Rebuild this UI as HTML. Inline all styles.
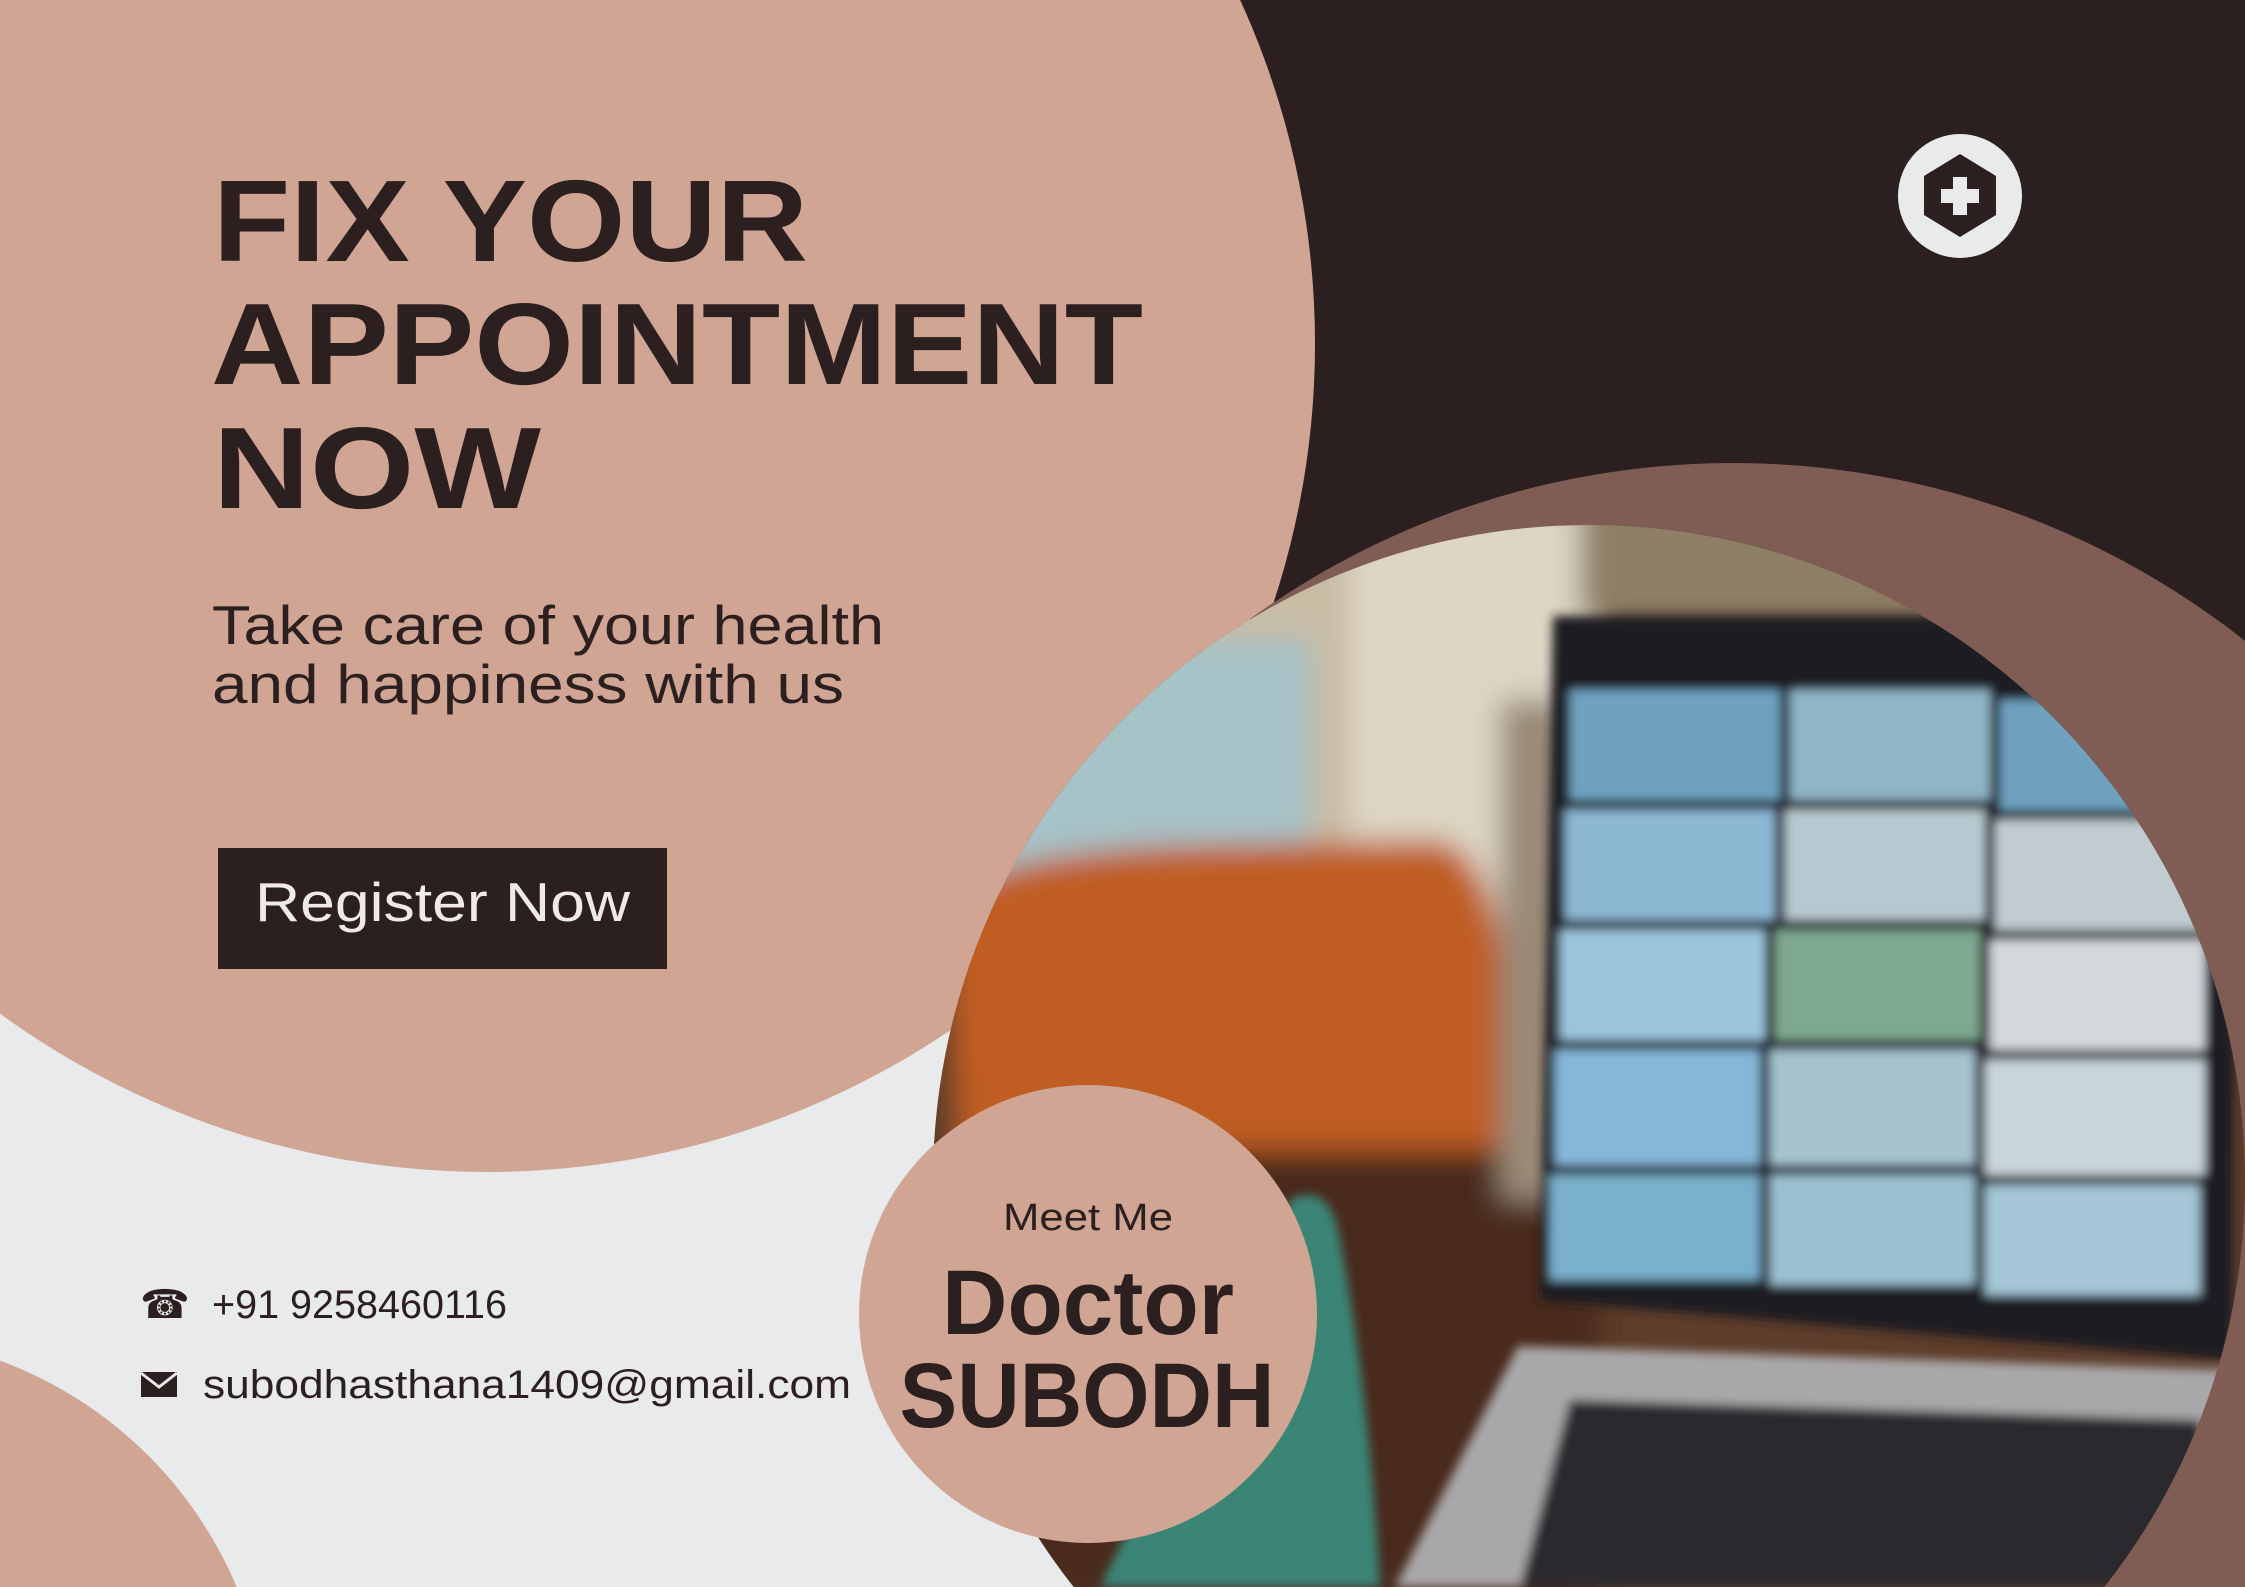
<!DOCTYPE html>
<html><head><meta charset="utf-8"><style>
html,body{margin:0;padding:0;width:2245px;height:1587px;overflow:hidden;background:#e9eaec}
svg{display:block}
text{font-family:"Liberation Sans",sans-serif}
</style></head><body>
<svg width="2245" height="1587" viewBox="0 0 2245 1587" xmlns="http://www.w3.org/2000/svg">
<defs>
<clipPath id="pc"><circle cx="1589" cy="1181" r="656"/></clipPath>
<clipPath id="bc"><rect x="1250" y="0" width="1000" height="1587"/></clipPath>
<filter id="bl" x="-20%" y="-20%" width="140%" height="140%"><feGaussianBlur stdDeviation="14"/></filter>
<filter id="bl2"><feGaussianBlur stdDeviation="5"/></filter>
</defs>
<rect width="2245" height="1587" fill="#e9eaec"/>
<rect x="1150" y="0" width="1095" height="1100" fill="#2b1f1f"/>
<circle cx="487" cy="344" r="828" fill="#d0a593"/>
<circle cx="-143" cy="1747" r="412" fill="#d0a593"/>
<circle cx="1733" cy="1289" r="826" fill="#7f5c54" clip-path="url(#bc)"/>
<g clip-path="url(#pc)">
<rect x="900" y="500" width="1400" height="1100" fill="#5e3d2a"/>
<g filter="url(#bl)">
<rect x="900" y="500" width="700" height="420" fill="#c8bca4"/>
<rect x="1350" y="500" width="250" height="500" fill="#ddd6c4"/>
<rect x="980" y="640" width="330" height="240" fill="#a6c3c8"/>
<rect x="1580" y="500" width="500" height="120" fill="#8e8066"/>
<path d="M945 900 Q1000 850 1200 845 L1440 840 Q1500 860 1505 1000 L1500 1200 L960 1220 Z" fill="#c05d22"/>
<rect x="900" y="1150" width="700" height="450" fill="#4a2a1c"/>
<rect x="1500" y="700" width="70" height="500" fill="#9a8a78"/>
</g>
<g filter="url(#bl2)">
<polygon points="1553,616 1962,616 2234,860 2232,1360 1540,1300" fill="#1d1d22"/>
<g fill="#6fa2c0">
<rect x="1570" y="690" width="210" height="110"/><rect x="1790" y="690" width="200" height="110" fill="#8fb6c6"/><rect x="2000" y="700" width="200" height="110"/>
<rect x="1565" y="810" width="210" height="110" fill="#8db8d4"/><rect x="1785" y="810" width="200" height="110" fill="#b7c9d0"/><rect x="1995" y="820" width="210" height="110" fill="#c0ccd0"/>
<rect x="1560" y="930" width="205" height="110" fill="#9cc5dc"/><rect x="1775" y="930" width="205" height="110" fill="#7ea890"/><rect x="1990" y="940" width="215" height="110" fill="#d3d9dc"/>
<rect x="1555" y="1050" width="205" height="115" fill="#86b7d8"/><rect x="1770" y="1050" width="205" height="115" fill="#a5c4d0"/><rect x="1985" y="1060" width="220" height="115" fill="#c9d5dc"/>
<rect x="1550" y="1175" width="210" height="105" fill="#7ab0cc"/><rect x="1770" y="1175" width="205" height="110" fill="#9bc0d0"/><rect x="1985" y="1185" width="215" height="110" fill="#a5c6d6"/>
</g>
<polygon points="1518,1346 2230,1370 2245,1587 1395,1587" fill="#a8a8aa"/>
<polygon points="1570,1400 2200,1420 2220,1587 1520,1587" fill="#2a2a2e"/>
<path d="M1290 1200 Q1330 1180 1340 1240 Q1370 1400 1380 1587 L1100 1587 Z" fill="#3a8577"/>
</g>
</g>
<circle cx="1088" cy="1314" r="229" fill="#d0a593"/>
<circle cx="1960" cy="196" r="62" fill="#e9eaec"/>
<polygon points="1960,154 1996,176 1996,215 1960,237 1924,215 1924,176" fill="#2b1f1f"/>
<rect x="1941" y="189" width="38" height="14" fill="#e9eaec"/>
<rect x="1953" y="177" width="14" height="38" fill="#e9eaec"/>
<g fill="#2b1f1f" font-weight="bold" font-size="116">
<text x="213" y="261" textLength="595" lengthAdjust="spacingAndGlyphs">FIX YOUR</text>
<text x="211" y="384" textLength="932" lengthAdjust="spacingAndGlyphs">APPOINTMENT</text>
<text x="213" y="508" textLength="328" lengthAdjust="spacingAndGlyphs">NOW</text>
</g>
<g fill="#2b1f1f" font-size="55">
<text x="212" y="644" textLength="672" lengthAdjust="spacingAndGlyphs">Take care of your health</text>
<text x="212" y="703" textLength="632" lengthAdjust="spacingAndGlyphs">and happiness with us</text>
</g>
<rect x="218" y="848" width="449" height="121" fill="#2b1f1f"/>
<text x="255" y="921" fill="#eeeae8" font-size="55" textLength="375" lengthAdjust="spacingAndGlyphs">Register Now</text>
<text x="140" y="1318" fill="#2b1f1f" font-size="40">☎</text>
<text x="212" y="1318" fill="#2b1f1f" font-size="40" textLength="295" lengthAdjust="spacingAndGlyphs">+91 9258460116</text>
<rect x="141" y="1372" width="36" height="25" fill="#2b1f1f"/>
<path d="M141 1373 L159 1387 L177 1373" stroke="#e9eaec" stroke-width="3" fill="none"/>
<text x="203" y="1398" fill="#2b1f1f" font-size="40" textLength="648" lengthAdjust="spacingAndGlyphs">subodhasthana1409@gmail.com</text>
<text x="1088" y="1230" fill="#2b1f1f" font-size="38" text-anchor="middle" textLength="170" lengthAdjust="spacingAndGlyphs">Meet Me</text>
<text x="1088" y="1334" fill="#2b1f1f" font-size="92" font-weight="bold" text-anchor="middle" textLength="292" lengthAdjust="spacingAndGlyphs">Doctor</text>
<text x="1087" y="1427" fill="#2b1f1f" font-size="92" font-weight="bold" text-anchor="middle" textLength="375" lengthAdjust="spacingAndGlyphs">SUBODH</text>
</svg>
</body></html>
